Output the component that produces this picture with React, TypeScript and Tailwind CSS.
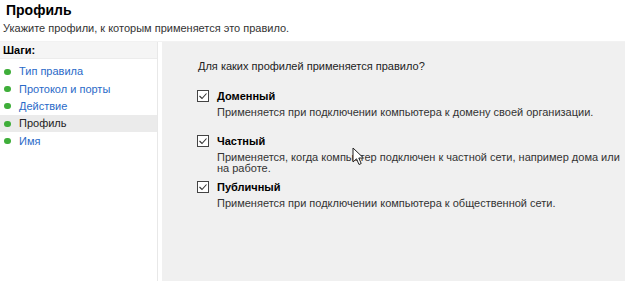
const steps = [
  { label: 'Тип правила', active: false },
  { label: 'Протокол и порты', active: false },
  { label: 'Действие', active: false },
  { label: 'Профиль', active: true },
  { label: 'Имя', active: false },
];

const profiles = [
  {
    title: 'Доменный',
    desc: ['Применяется при подключении компьютера к домену своей организации.'],
  },
  {
    title: 'Частный',
    desc: [
      'Применяется, когда компьютер подключен к частной сети, например дома или',
      'на работе.',
    ],
  },
  {
    title: 'Публичный',
    desc: ['Применяется при подключении компьютера к общественной сети.'],
  },
];

const CheckBox = () => (
  <div className="w-[12px] h-[12px] border border-[#444] bg-white flex items-center justify-center">
    <svg width="10" height="10" viewBox="0 0 10 10">
      <path d="M1.5 5 L4 7.5 L8.5 2.5" fill="none" stroke="#333" strokeWidth="1.1" />
    </svg>
  </div>
);

const Cursor = () => (
  <svg
    className="absolute left-[352px] top-[147px]"
    width="14"
    height="20"
    viewBox="0 0 14 20"
  >
    <path
      d="M1 1 L1 15 L4.5 11.8 L7 17.5 L9.2 16.5 L6.8 11 L11.5 11 Z"
      fill="white"
      stroke="#222"
      strokeWidth="1"
      strokeLinejoin="round"
    />
  </svg>
);

const App = () => {
  return (
    <div
      className="relative w-[625px] h-[281px] overflow-hidden bg-white text-[11px] text-[#1e1e1e]"
      style={{ fontFamily: '"Liberation Sans", Arial, sans-serif' }}
    >
      <div className="h-[41px] pt-[1px]">
        <div className="px-[6px] text-[14px] font-bold text-black leading-[18px]">Профиль</div>
        <div className="px-[3px] mt-[3px] leading-[13px] text-[#333]">
          Укажите профили, к которым применяется это правило.
        </div>
      </div>
      <div className="h-[1px] bg-[#f2f2f2]" />
      <div className="flex h-[239px]">
        <div className="w-[158px] shrink-0 border-r border-[#e8e8e8] bg-white">
          <div className="h-[17px] px-[3px] flex items-center font-bold text-black bg-[#f5f5f5] border-b border-[#ececec]">
            Шаги:
          </div>
          <div className="pt-[4px]">
            {steps.map((s) => (
              <div
                key={s.label}
                className={`h-[17.3px] flex items-center pl-[4px] ${s.active ? 'bg-[#ebebeb]' : ''}`}
              >
                <div className="w-[7px] h-[6px] rounded-full bg-[#3fae3a]" />
                <span className={`ml-[8px] ${s.active ? 'text-[#222]' : 'text-[#2a6ac8]'}`}>
                  {s.label}
                </span>
              </div>
            ))}
          </div>
        </div>
        <div className="w-[4px] shrink-0 bg-white" />
        <div className="flex-1 bg-[#f0f0f0] pl-[35px] pt-[18px]">
          <div className="ml-[1px] leading-[13px] text-[#222]">
            Для каких профилей применяется правило?
          </div>
          <div className="mt-[16px] flex flex-col gap-[6px]">
            {profiles.map((p) => (
              <div key={p.title}>
                <div className="flex items-center gap-[8px] h-[14px]">
                  <CheckBox />
                  <span className="font-bold text-black">{p.title}</span>
                </div>
                <div className="ml-[20px] mt-[4px] min-h-[21px] leading-[11px] text-[#333]">
                  {p.desc.map((d) => (
                    <div key={d}>{d}</div>
                  ))}
                </div>
              </div>
            ))}
          </div>
        </div>
      </div>
      <Cursor />
    </div>
  );
};

export default App;
